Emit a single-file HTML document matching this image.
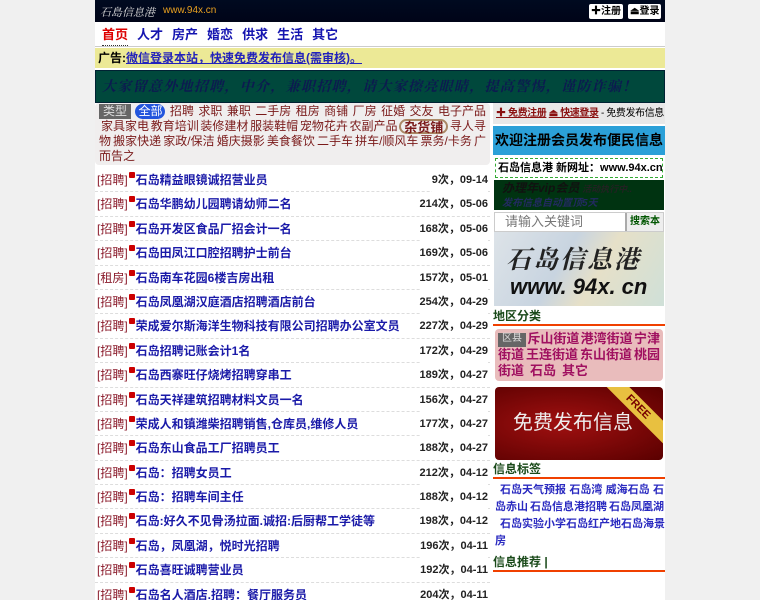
<!DOCTYPE html>
<html><head><meta charset="utf-8"><style>
*{margin:0;padding:0;box-sizing:border-box}
body{width:760px;height:600px;overflow:hidden;background:#f0f0f0;font-family:"Liberation Sans","Noto Sans CJK SC",sans-serif;font-size:12px}
#w{position:absolute;left:95px;top:0;width:570px;height:600px;background:#fff;overflow:hidden}
.hd{height:22px;background:linear-gradient(#000a20,#000418);position:relative}
.hd .logo{position:absolute;left:5px;top:4px;color:#ddd;font-family:"Noto Serif CJK SC",serif;font-style:italic;font-size:11px}
.hd .url{position:absolute;left:68px;top:5px;color:#e8a020;font-size:10px}
.hd .btn{position:absolute;top:4px;height:15px;background:#fff;border-radius:2px;font-size:10px;font-weight:bold;line-height:15px;padding:0 2px;white-space:nowrap}
.nav{height:25px;border-bottom:1px solid #ccc;padding-left:7px}
.nav a{display:inline-block;margin-right:9px;font-size:13px;font-weight:bold;color:#1515b0;line-height:25px}
.ad{height:20px;background:#ece996;margin-top:1px;font-size:12px;font-weight:bold;line-height:20px;padding-left:3px}
.ad a{color:#2222bb;text-decoration:underline}
.ban{margin-top:2px;height:33px;background:#00483c;border:1px solid #023;color:#0c1a50;font-family:"Noto Serif CJK SC",serif;font-style:italic;font-weight:bold;font-size:14px;line-height:31px;padding-left:6px;letter-spacing:1.3px;white-space:nowrap;overflow:hidden}
.L{position:absolute;left:0;top:103px;width:395px}
.cat{background:#f0eeee;border-radius:4px;padding:1px 4px 2px;font-size:12px;color:#7a1a1a;height:62px}
.ln{display:flex;justify-content:space-between;white-space:nowrap;height:15px;line-height:15px}
.tag{background:#666;color:#ddd;padding:0 4px}
.all{background:#2255dd;color:#fff;border-radius:8px;padding:0 3px}
.zh{border:2px solid #a86;border-radius:8px;font-weight:bold;font-size:13px;padding:0 3px;line-height:13px}
.row{height:24.4px;border-bottom:1px dashed #ddd;line-height:24px;position:relative;padding-left:2px;font-size:12px;white-space:nowrap}
.row .t{color:#8a1a2a}.row .d{display:inline-block;width:6px;height:6px;background:#c00;border-radius:1px;vertical-align:top;margin:4px 1px 0 1px}
.row a{color:#1a1aa8;font-weight:bold}
.row .r{position:absolute;right:2px;top:0;font-weight:bold;font-size:11px;color:#222;background:#fff}
.R{position:absolute;left:398px;top:103px;width:172px}
.lg{height:21px;background:#e8e8e8;font-size:10px;line-height:21px;padding-left:3px;font-weight:bold;white-space:nowrap;overflow:hidden;letter-spacing:-0.4px}
.lg a{color:#8a1010;text-decoration:underline}
.wel{margin-top:2px;height:29px;background:#2ba0d8;font-weight:bold;font-size:14px;line-height:29px;text-align:center;white-space:nowrap;overflow:hidden}
.addr{margin:3px 2px 0;height:20px;border:1px dashed #3a3;font-weight:bold;font-size:11px;line-height:18px;padding-left:2px;white-space:nowrap;overflow:hidden}
.vip{margin:2px 1px 0;height:30px;background:#031;font-style:italic;font-weight:bold;font-size:10px;line-height:14px;padding:1px 8px;color:#222a60;white-space:nowrap;overflow:hidden}
.sr{margin:2px 1px 0;height:20px;display:flex;border:1px solid #ccc}
.sr div{flex:1;color:#777;font-size:13px;line-height:18px;padding-left:10px}
.sr b{width:38px;background:#eee;border-left:2px solid #aaa;font-size:10px;line-height:18px;text-align:center;color:#050}
.map{margin:0 1px;height:74px;background:linear-gradient(120deg,#dde3e8,#c8d4e0 40%,#e6e0c8 60%,#cfe0d8);position:relative;overflow:hidden}
.map .a{position:absolute;left:12px;top:8px;font-family:"Noto Serif CJK SC",serif;font-weight:bold;font-style:italic;font-size:25px;color:#222;letter-spacing:2px;white-space:nowrap}
.map .b{position:absolute;left:16px;top:42px;font-weight:bold;font-style:italic;font-size:22px;color:#111;white-space:nowrap}
.h{margin-top:4px;height:16px;font-weight:bold;color:#1a4a1a;font-size:12px;border-bottom:2px solid #f04000;line-height:12px}
.dist{margin:3px 2px 0;background:#e9bcbc;border-radius:4px;padding:2px 3px;color:#a01060;font-size:13px;height:52px;font-weight:bold}
.dist .ln{height:16px;line-height:16px}
.dist .tag{font-size:10px;font-weight:normal;line-height:12px;margin-top:2px}
.free{margin:6px 2px 0;height:73px;border-radius:4px;background:radial-gradient(ellipse at 40% 50%,#a01010,#5a0000);color:#eee;font-size:20px;line-height:73px;padding-left:18px;position:relative;overflow:hidden}
.free i{position:absolute;right:-20px;top:12px;width:90px;height:16px;background:#e8c040;transform:rotate(45deg);font-size:11px;font-style:normal;color:#700;line-height:16px;text-align:center;font-weight:bold}
.tags{padding:3px 1px 0 2px;color:#2a2ac0;font-weight:bold;font-size:11px}
.tags .ln{height:17px;line-height:17px}
</style></head><body><div id="w">
<div class="hd"><span class="logo">石島信息港</span><span class="url">www.94x.cn</span><span class="btn" style="left:494px">✚注册</span><span class="btn" style="left:533px">⏏登录</span></div>
<div class="nav"><a style="color:#d00;border-bottom:1px dotted #333;line-height:20px">首页</a><a>人才</a><a>房产</a><a>婚恋</a><a>供求</a><a>生活</a><a>其它</a></div>
<div class="ad">广告:<a>微信登录本站，快速免费发布信息(需审核)。</a></div>
<div class="ban">大家留意外地招聘，中介，兼职招聘，请大家擦亮眼睛，提高警惕，谨防诈骗！</div>
<div class="L">
<div class="cat">
<div class="ln"><span class="tag">类型</span><span class="all">全部</span><span>招聘</span><span>求职</span><span>兼职</span><span>二手房</span><span>租房</span><span>商铺</span><span>厂房</span><span>征婚</span><span>交友</span><span>电子产品</span></div>
<div class="ln" style="padding-left:2px"><span>家具家电</span><span>教育培训</span><span>装修建材</span><span>服装鞋帽</span><span>宠物花卉</span><span>农副产品</span><span class="zh">杂货铺</span><span>寻人寻</span></div>
<div class="ln"><span>物</span><span>搬家快递</span><span>家政/保洁</span><span>婚庆摄影</span><span>美食餐饮</span><span>二手车</span><span>拼车/顺风车</span><span>票务/卡务</span><span>广</span></div>
<div class="ln"><span>而告之</span></div>
</div>
<div style="height:3px"></div>
<div class="row"><span class="t">[招聘]</span><span class="d"></span><a>石岛精益眼镜诚招营业员</a><span class="r">9次，09-14</span></div>
<div class="row"><span class="t">[招聘]</span><span class="d"></span><a>石岛华鹏幼儿园聘请幼师二名</a><span class="r">214次，05-06</span></div>
<div class="row"><span class="t">[招聘]</span><span class="d"></span><a>石岛开发区食品厂招会计一名</a><span class="r">168次，05-06</span></div>
<div class="row"><span class="t">[招聘]</span><span class="d"></span><a>石岛田凤江口腔招聘护士前台</a><span class="r">169次，05-06</span></div>
<div class="row"><span class="t">[租房]</span><span class="d"></span><a>石岛南车花园6楼吉房出租</a><span class="r">157次，05-01</span></div>
<div class="row"><span class="t">[招聘]</span><span class="d"></span><a>石岛凤凰湖汉庭酒店招聘酒店前台</a><span class="r">254次，04-29</span></div>
<div class="row"><span class="t">[招聘]</span><span class="d"></span><a>荣成爱尔斯海洋生物科技有限公司招聘办公室文员</a><span class="r">227次，04-29</span></div>
<div class="row"><span class="t">[招聘]</span><span class="d"></span><a>石岛招聘记账会计1名</a><span class="r">172次，04-29</span></div>
<div class="row"><span class="t">[招聘]</span><span class="d"></span><a>石岛西寨旺仔烧烤招聘穿串工</a><span class="r">189次，04-27</span></div>
<div class="row"><span class="t">[招聘]</span><span class="d"></span><a>石岛天祥建筑招聘材料文员一名</a><span class="r">156次，04-27</span></div>
<div class="row"><span class="t">[招聘]</span><span class="d"></span><a>荣成人和镇潍柴招聘销售,仓库员,维修人员</a><span class="r">177次，04-27</span></div>
<div class="row"><span class="t">[招聘]</span><span class="d"></span><a>石岛东山食品工厂招聘员工</a><span class="r">188次，04-27</span></div>
<div class="row"><span class="t">[招聘]</span><span class="d"></span><a>石岛：招聘女员工</a><span class="r">212次，04-12</span></div>
<div class="row"><span class="t">[招聘]</span><span class="d"></span><a>石岛：招聘车间主任</a><span class="r">188次，04-12</span></div>
<div class="row"><span class="t">[招聘]</span><span class="d"></span><a>石岛:好久不见骨汤拉面.诚招:后厨帮工学徒等</a><span class="r">198次，04-12</span></div>
<div class="row"><span class="t">[招聘]</span><span class="d"></span><a>石岛，凤凰湖，悦时光招聘</a><span class="r">196次，04-11</span></div>
<div class="row"><span class="t">[招聘]</span><span class="d"></span><a>石岛喜旺诚聘营业员</a><span class="r">192次，04-11</span></div>
<div class="row"><span class="t">[招聘]</span><span class="d"></span><a>石岛名人酒店.招聘：餐厅服务员</a><span class="r">204次，04-11</span></div>
</div>
<div class="R">
<div class="lg"><a>✚ 免费注册</a> <a>⏏ 快速登录</a> <span style="font-weight:normal">- 免费发布信息</span></div>
<div class="wel">欢迎注册会员发布便民信息</div>
<div class="addr">石岛信息港 新网址：www.94x.cn</div>
<div class="vip"><span style="color:#111;font-size:12px">办理年vip会员</span> <span style="color:#222;font-size:9px">活动执行中..</span><br>发布信息自动置顶5天</div>
<div class="sr"><div>请输入关键词</div><b>搜索本站</b></div>
<div class="map"><span class="a">石岛信息港</span><span class="b">www. 94x. cn</span></div>
<div class="h">地区分类</div>
<div class="dist">
<div class="ln"><span class="tag">区县</span><span>斥山街道</span><span>港湾街道</span><span>宁津</span></div>
<div class="ln"><span>街道</span><span>王连街道</span><span>东山街道</span><span>桃园</span></div>
<div class="ln" style="justify-content:flex-start;gap:6px"><span>街道</span><span>石岛</span><span>其它</span></div>
</div>
<div class="free">免费发布信息<i>FREE</i></div>
<div class="h" style="margin-top:3px">信息标签</div>
<div class="tags">
<div class="ln" style="padding-left:5px"><span>石岛天气预报</span><span>石岛湾</span><span>威海石岛</span><span>石</span></div>
<div class="ln"><span>岛赤山</span><span>石岛信息港招聘</span><span>石岛凤凰湖</span></div>
<div class="ln" style="padding-left:5px"><span>石岛实验小学</span><span>石岛红产地</span><span>石岛海景</span></div>
<div class="ln"><span>房</span></div>
</div>
<div class="h" style="margin-top:6px">信息推荐 |</div>
</div>
</div></body></html>
